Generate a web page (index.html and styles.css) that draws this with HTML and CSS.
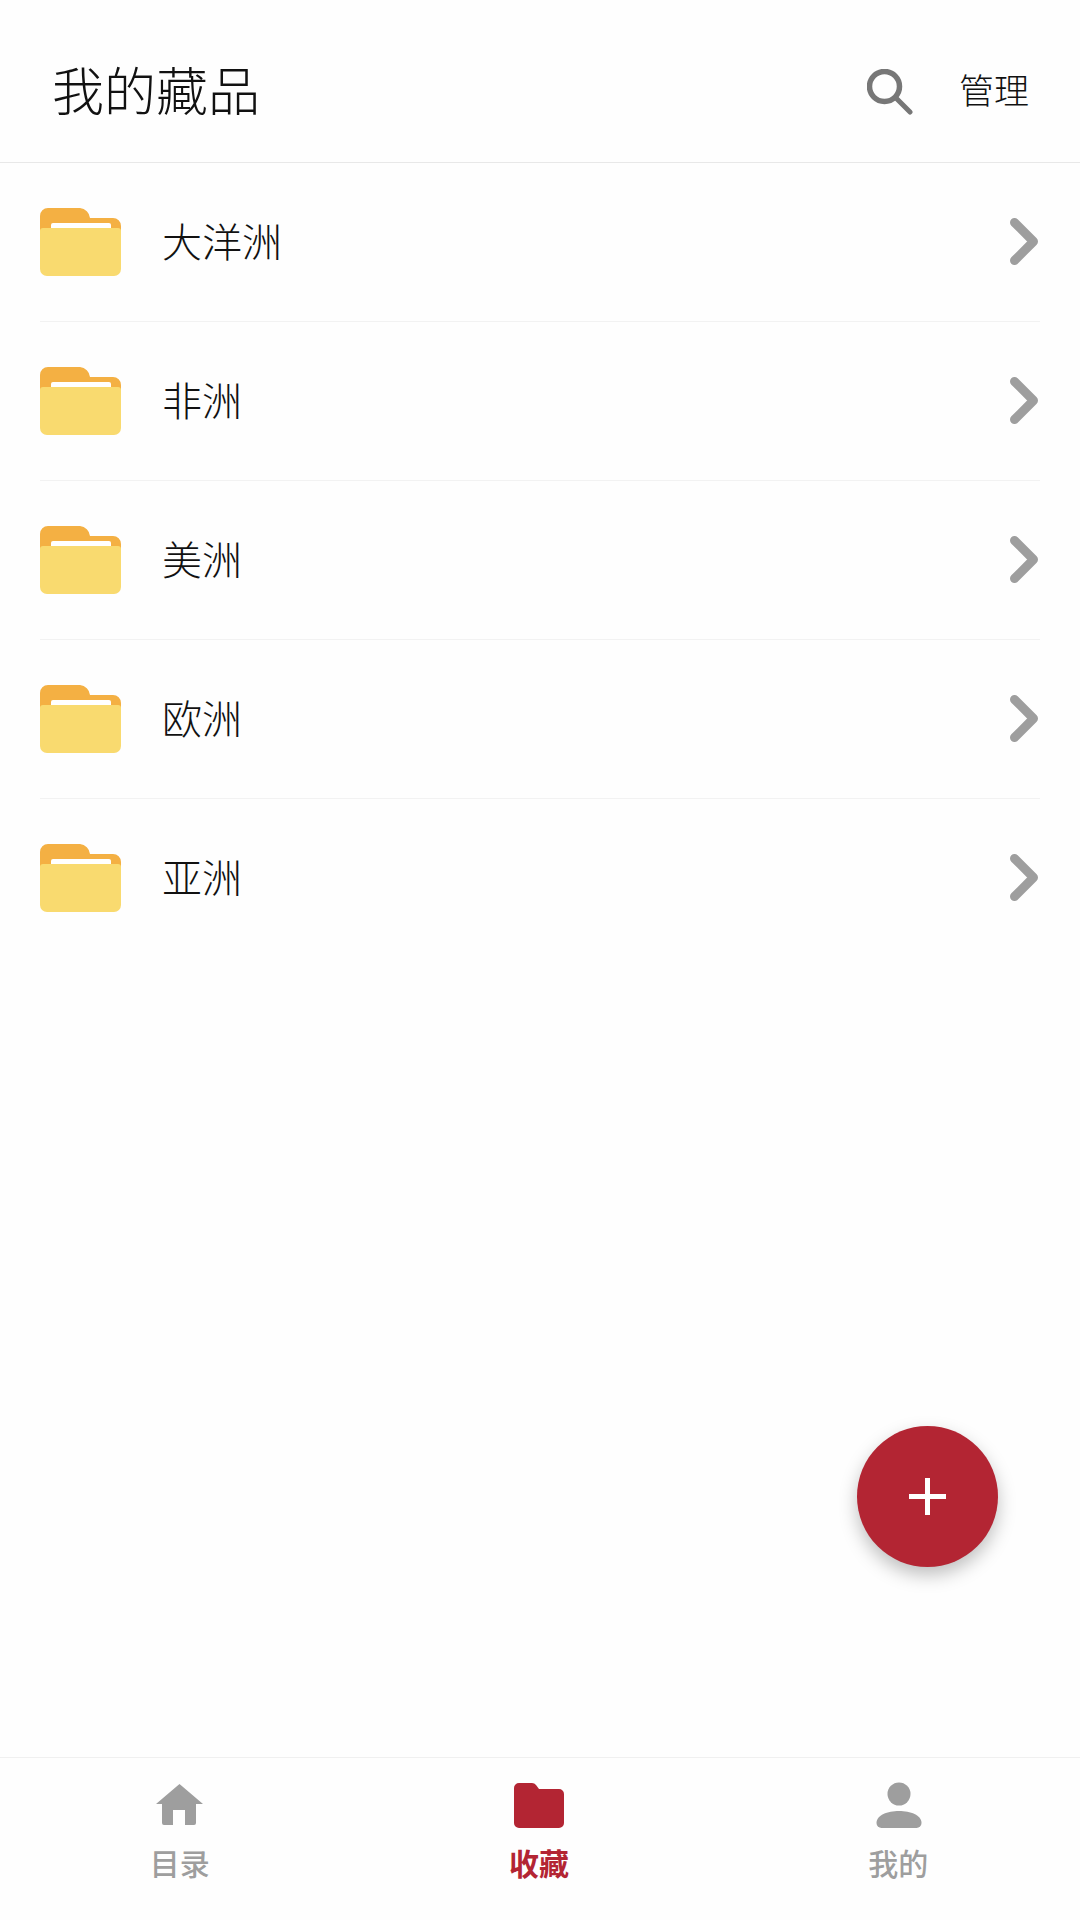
FILE: index.html
```html
<!DOCTYPE html>
<html lang="zh-CN">
<head>
  <meta charset="UTF-8">
  <meta name="viewport" content="width=device-width, initial-scale=1.0">
  <title>我的藏品</title>
  <link rel="stylesheet" href="styles.css">
</head>
<body>
  <div class="app">
    <header class="top-bar">
      <h1>我的藏品</h1>
      <svg class="search-icon" viewBox="0 0 46 46" width="46" height="46">
        <circle cx="17.5" cy="17.5" r="15" fill="none" stroke="#777" stroke-width="5.500"/>
        <path d="M29 29L43 43" fill="none" stroke="#777" stroke-width="5" stroke-linecap="round"/>
      </svg>
      <span class="manage">管理</span>
    </header>

    <main class="folder-list">
      <div class="folder-row">
        <svg class="folder-icon" viewBox="0 0 81 68" width="81" height="68"><path d="M0 8a8 8 0 0 1 8-8h32a11 11 0 0 1 10 10h23a8 8 0 0 1 8 8v16H0z" fill="#f4b043"/><rect x="11" y="15" width="60" height="20" rx="2" fill="#fff"/><path d="M0 23a3 3 0 0 1 3-3h75a3 3 0 0 1 3 3v38a7 7 0 0 1-7 7H7a7 7 0 0 1-7-7z" fill="#f9da6f"/></svg>
        <span class="folder-name">大洋洲</span>
        <svg class="chevron" viewBox="0 0 28 47" width="28" height="47"><path d="M4.500 4.500L23.500 23.500L4.500 42.500" fill="none" stroke="#9e9e9e" stroke-width="9" stroke-linecap="round" stroke-linejoin="round"/></svg>
      </div>
      <div class="folder-row">
        <svg class="folder-icon" viewBox="0 0 81 68" width="81" height="68"><path d="M0 8a8 8 0 0 1 8-8h32a11 11 0 0 1 10 10h23a8 8 0 0 1 8 8v16H0z" fill="#f4b043"/><rect x="11" y="15" width="60" height="20" rx="2" fill="#fff"/><path d="M0 23a3 3 0 0 1 3-3h75a3 3 0 0 1 3 3v38a7 7 0 0 1-7 7H7a7 7 0 0 1-7-7z" fill="#f9da6f"/></svg>
        <span class="folder-name">非洲</span>
        <svg class="chevron" viewBox="0 0 28 47" width="28" height="47"><path d="M4.500 4.500L23.500 23.500L4.500 42.500" fill="none" stroke="#9e9e9e" stroke-width="9" stroke-linecap="round" stroke-linejoin="round"/></svg>
      </div>
      <div class="folder-row">
        <svg class="folder-icon" viewBox="0 0 81 68" width="81" height="68"><path d="M0 8a8 8 0 0 1 8-8h32a11 11 0 0 1 10 10h23a8 8 0 0 1 8 8v16H0z" fill="#f4b043"/><rect x="11" y="15" width="60" height="20" rx="2" fill="#fff"/><path d="M0 23a3 3 0 0 1 3-3h75a3 3 0 0 1 3 3v38a7 7 0 0 1-7 7H7a7 7 0 0 1-7-7z" fill="#f9da6f"/></svg>
        <span class="folder-name">美洲</span>
        <svg class="chevron" viewBox="0 0 28 47" width="28" height="47"><path d="M4.500 4.500L23.500 23.500L4.500 42.500" fill="none" stroke="#9e9e9e" stroke-width="9" stroke-linecap="round" stroke-linejoin="round"/></svg>
      </div>
      <div class="folder-row">
        <svg class="folder-icon" viewBox="0 0 81 68" width="81" height="68"><path d="M0 8a8 8 0 0 1 8-8h32a11 11 0 0 1 10 10h23a8 8 0 0 1 8 8v16H0z" fill="#f4b043"/><rect x="11" y="15" width="60" height="20" rx="2" fill="#fff"/><path d="M0 23a3 3 0 0 1 3-3h75a3 3 0 0 1 3 3v38a7 7 0 0 1-7 7H7a7 7 0 0 1-7-7z" fill="#f9da6f"/></svg>
        <span class="folder-name">欧洲</span>
        <svg class="chevron" viewBox="0 0 28 47" width="28" height="47"><path d="M4.500 4.500L23.500 23.500L4.500 42.500" fill="none" stroke="#9e9e9e" stroke-width="9" stroke-linecap="round" stroke-linejoin="round"/></svg>
      </div>
      <div class="folder-row last">
        <svg class="folder-icon" viewBox="0 0 81 68" width="81" height="68"><path d="M0 8a8 8 0 0 1 8-8h32a11 11 0 0 1 10 10h23a8 8 0 0 1 8 8v16H0z" fill="#f4b043"/><rect x="11" y="15" width="60" height="20" rx="2" fill="#fff"/><path d="M0 23a3 3 0 0 1 3-3h75a3 3 0 0 1 3 3v38a7 7 0 0 1-7 7H7a7 7 0 0 1-7-7z" fill="#f9da6f"/></svg>
        <span class="folder-name">亚洲</span>
        <svg class="chevron" viewBox="0 0 28 47" width="28" height="47"><path d="M4.500 4.500L23.500 23.500L4.500 42.500" fill="none" stroke="#9e9e9e" stroke-width="9" stroke-linecap="round" stroke-linejoin="round"/></svg>
      </div>
    </main>

    <div class="fab"><span class="fab-h"></span><span class="fab-v"></span></div>

    <nav class="tab-bar">
      <div class="tab">
        <svg viewBox="0 0 50 46" width="50" height="46"><path d="M24.500 2L48 22H41V41a2 2 0 0 1-2 2H30V28H18V43H9a2 2 0 0 1-2-2V22H1z" fill="#9e9e9e"/></svg>
        <span>目录</span>
      </div>
      <div class="tab active">
        <svg viewBox="0 0 50 46" width="50" height="46"><path d="M0 6a5 5 0 0 1 5-5h13a5 5 0 0 1 4 2l3 4h20a5 5 0 0 1 5 5v29a5 5 0 0 1-5 5H5a5 5 0 0 1-5-5z" fill="#b32533"/></svg>
        <span>收藏</span>
      </div>
      <div class="tab">
        <svg viewBox="0 0 50 46" width="50" height="46"><circle cx="26" cy="12" r="11.500" fill="#9e9e9e"/><path d="M3.500 41c0-8 11-12 22.500-12s22.500 4 22.500 12a5 5 0 0 1-5 5H8.500a5 5 0 0 1-5-5z" fill="#9e9e9e"/></svg>
        <span>我的</span>
      </div>
    </nav>
  </div>
</body>
</html>
```
FILE: styles.css
```css
* {
  box-sizing: border-box;
}
html, body {
  margin: 0;
  padding: 0;
}
body {
  font-family: "Noto Sans CJK SC", "Liberation Sans", sans-serif;
  background: #fefefe;
  color: #111;
}
.app {
  position: relative;
  width: 1080px;
  height: 1920px;
  display: flex;
  flex-direction: column;
}
.top-bar {
  height: 163px;
  flex-shrink: 0;
  display: flex;
  align-items: center;
  padding: 14px 51px 0 52px;
  border-bottom: 1px solid #e8e8e8;
}
.top-bar h1 {
  margin: 0;
  font-size: 52px;
  font-weight: 300;
  flex: 1;
}
.search-icon {
  margin: 8px 46px 0 0;
}
.manage {
  font-size: 35px;
  font-weight: 300;
}
.folder-list {
  flex: 1;
}
.folder-row {
  height: 158.9px;
  margin: 0 40px;
  display: flex;
  align-items: center;
  border-bottom: 1px solid #f2f2f2;
}
.folder-row.last {
  border-bottom: none;
}
.folder-icon {
  margin-right: 41px;
}
.folder-name {
  flex: 1;
  font-size: 40px;
  font-weight: 300;
  padding-bottom: 4px;
}
.chevron {
  margin: 0 2px 1px 0;
}
.fab {
  position: absolute;
  left: 857px;
  top: 1426px;
  width: 141px;
  height: 141px;
  border-radius: 50%;
  background: #b32533;
  box-shadow: 0 8px 18px rgba(0,0,0,0.25);
}
.fab-h, .fab-v {
  position: absolute;
  background: #fff;
}
.fab-h {
  left: 52px;
  top: 67.75px;
  width: 37px;
  height: 5.5px;
}
.fab-v {
  left: 67.75px;
  top: 52px;
  width: 5.5px;
  height: 37px;
}
.tab-bar {
  height: 163px;
  flex-shrink: 0;
  display: flex;
  padding-right: 2px;
  border-top: 1px solid #f0f0f0;
}
.tab {
  flex: 1;
  display: flex;
  flex-direction: column;
  align-items: center;
  padding-top: 24px;
  color: #9e9e9e;
  font-size: 30px;
  font-weight: 500;
}
.tab span {
  line-height: 44px;
  margin-top: 12px;
}
.tab.active {
  color: #b32533;
  font-weight: 700;
}
```
